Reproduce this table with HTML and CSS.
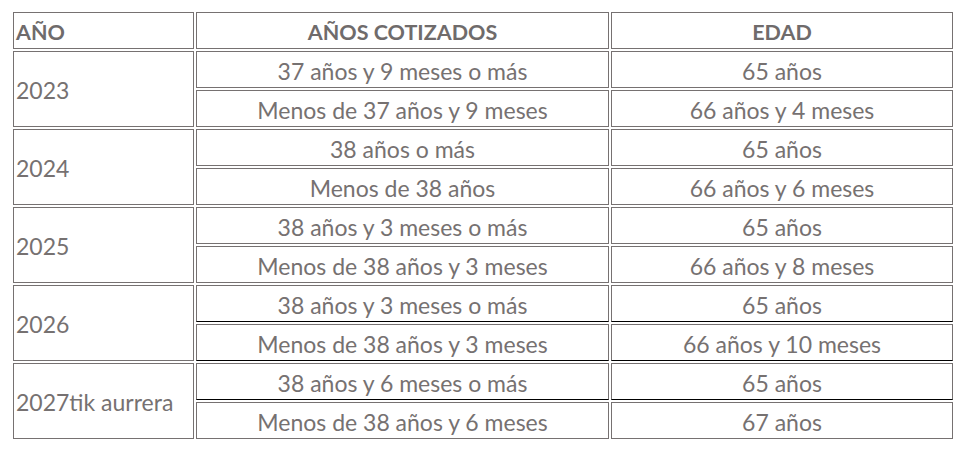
FILE: index.html
```html
<!DOCTYPE html>
<html lang="es">
<head>
<meta charset="utf-8">
<link rel="stylesheet" href="styles.css">
</head>
<body>
<table class="tabla">
  <colgroup>
    <col class="c-year">
    <col class="c-years">
    <col class="c-age">
  </colgroup>
  <thead>
    <tr>
      <th class="year">AÑO</th>
      <th>AÑOS COTIZADOS</th>
      <th>EDAD</th>
    </tr>
  </thead>
  <tbody>
    <tr><td class="year" rowspan="2">2023</td><td>37 años y 9 meses o más</td><td>65 años</td></tr>
    <tr><td>Menos de 37 años y 9 meses</td><td>66 años y 4 meses</td></tr>
    <tr><td class="year" rowspan="2">2024</td><td>38 años o más</td><td>65 años</td></tr>
    <tr><td>Menos de 38 años</td><td>66 años y 6 meses</td></tr>
    <tr><td class="year" rowspan="2">2025</td><td>38 años y 3 meses o más</td><td>65 años</td></tr>
    <tr><td>Menos de 38 años y 3 meses</td><td>66 años y 8 meses</td></tr>
    <tr class="dark"><td class="year" rowspan="2">2026</td><td>38 años y 3 meses o más</td><td>65 años</td></tr>
    <tr class="dark"><td>Menos de 38 años y 3 meses</td><td>66 años y 10 meses</td></tr>
    <tr class="dark"><td class="year" rowspan="2">2027tik aurrera</td><td>38 años y 6 meses o más</td><td>65 años</td></tr>
    <tr><td>Menos de 38 años y 6 meses</td><td>67 años</td></tr>
  </tbody>
</table>
</body>
</html>
```
FILE: styles.css
```css
html, body {
  margin: 0;
  padding: 0;
  background: #ffffff;
}
body {
  padding: 10px 0 0 11px;
  font-family: "Lato", "Liberation Sans", sans-serif;
  color: #767171;
}
.tabla {
  border-collapse: separate;
  border-spacing: 2px;
  table-layout: fixed;
  width: 942px;
}
.c-year { width: 181px; }
.c-years { width: 413px; }
.c-age { width: 342px; }
.tabla th,
.tabla td {
  border: 1px solid #767171;
  height: 37px;
  padding: 2px 2px 0;
  font-size: 23px;
  line-height: 28px;
  text-align: center;
  vertical-align: middle;
  box-sizing: border-box;
  white-space: nowrap;
}
.tabla th {
  font-size: 21.5px;
  font-weight: 700;
  color: #6f6b6b;
}
.tabla .year {
  text-align: left;
}
.tabla tr.dark td:not(.year) {
  border-bottom-color: #000000;
}
```
